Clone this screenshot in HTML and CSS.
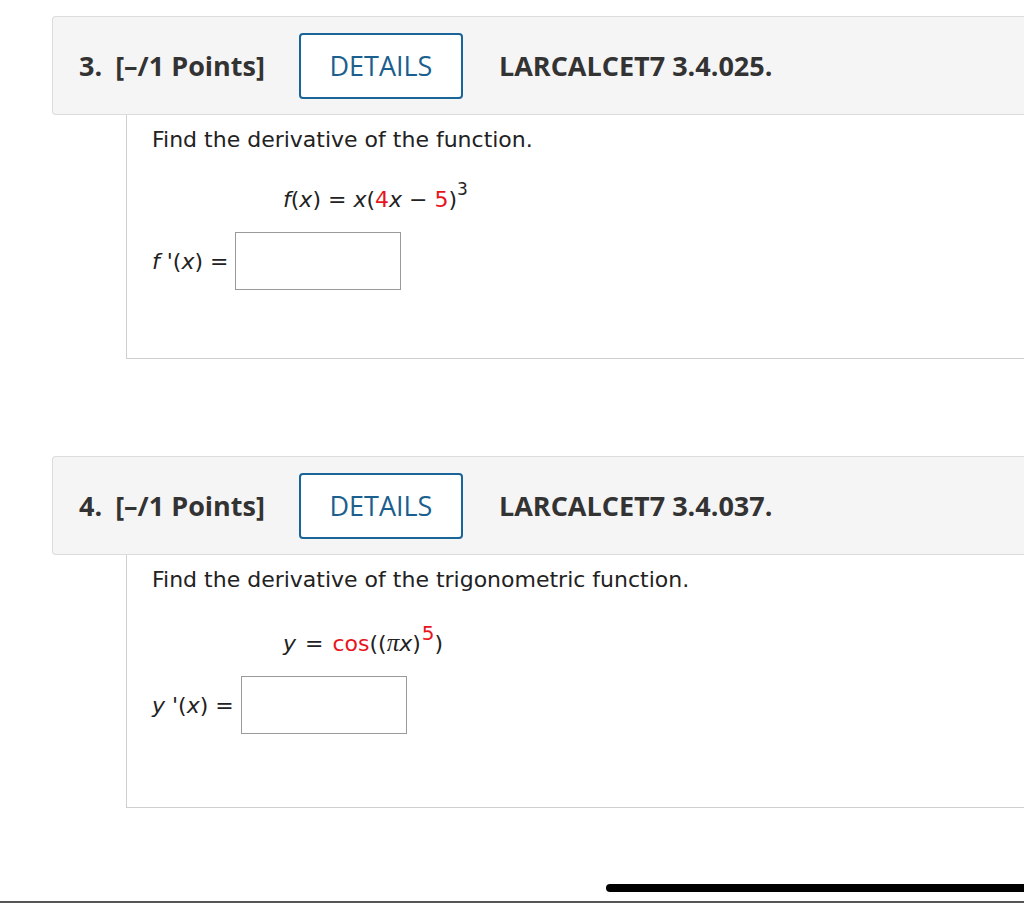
FILE: index.html
```html
<!DOCTYPE html>
<html>
<head>
<meta charset="utf-8">
<link rel="stylesheet" href="styles.css">
</head>
<body>
<div class="page">
  <section class="question">
    <div class="q-head">
      <span class="q-num">3.</span>
      <span class="q-points">[–/1 Points]</span>
      <span class="details-btn">DETAILS</span>
      <span class="q-ref">LARCALCET7 3.4.025.</span>
    </div>
    <div class="q-body">
      <p class="prompt">Find the derivative of the function.</p>
      <p class="formula"><i>f</i>(<i>x</i>) = <i>x</i>(<span class="red">4</span><i>x</i> − <span class="red">5</span>)<sup>3</sup></p>
      <div class="answer-row">
        <span class="label"><i>f</i> '(<i>x</i>) =</span>
        <span class="answer-box"></span>
      </div>
    </div>
  </section>

  <section class="question second">
    <div class="q-head">
      <span class="q-num">4.</span>
      <span class="q-points">[–/1 Points]</span>
      <span class="details-btn">DETAILS</span>
      <span class="q-ref">LARCALCET7 3.4.037.</span>
    </div>
    <div class="q-body">
      <p class="prompt">Find the derivative of the trigonometric function.</p>
      <p class="formula"><i>y</i> = <span class="red">cos</span>((<i class="pi">π</i><i>x</i>)<sup class="red big">5</sup>)</p>
      <div class="answer-row">
        <span class="label"><i>y</i> '(<i>x</i>) =</span>
        <span class="answer-box"></span>
      </div>
    </div>
  </section>
</div>
<div class="home-bar"></div>
<div class="bottom-line"></div>
</body>
</html>
```

FILE: styles.css
```css
html, body {
  margin: 0;
  padding: 0;
  background: #ffffff;
}
body {
  width: 1024px;
  height: 903px;
  overflow: hidden;
  position: relative;
}
.page {
  padding: 16px 0 0 52px;
}
.question.second {
  margin-top: 97px;
}
.q-head {
  height: 99px;
  box-sizing: border-box;
  border: 1px solid #dcdcdc;
  border-right: none;
  border-radius: 4px 0 0 4px;
  background: #f5f5f5;
  display: flex;
  align-items: center;
  padding-left: 26px;
  font-family: "Open Sans", sans-serif;
  font-weight: 700;
  font-size: 27px;
  color: #333333;
}
.q-num {
  margin-right: 13px;
}
.q-points {
  margin-right: 34px;
}
.details-btn {
  width: 164px;
  height: 66px;
  box-sizing: border-box;
  border: 2px solid #1a6598;
  border-radius: 4px;
  background: #ffffff;
  color: #1a5f8e;
  font-weight: 500;
  display: flex;
  align-items: center;
  justify-content: center;
  margin-right: 36px;
}
.q-body {
  margin-left: 74px;
  border-left: 1px solid #cfcfcf;
  border-bottom: 1px solid #cfcfcf;
  height: 244px;
  box-sizing: border-box;
  padding: 12px 0 0 25px;
  font-family: "DejaVu Sans", sans-serif;
  font-size: 22px;
  color: #222222;
}
.second .q-body {
  height: 253px;
}
.prompt {
  margin: 0;
  line-height: 26px;
}
.formula {
  margin: 34px 0 0 131px;
  line-height: 26px;
}
.second .formula {
  margin-top: 37px;
  word-spacing: 2px;
}
.formula sup {
  font-size: 17px;
  vertical-align: 12px;
  line-height: 0;
}
.formula sup.big {
  font-size: 20px;
  vertical-align: 11px;
  margin-left: 1px;
}
.pi {
  font-family: "Liberation Serif", serif;
  font-size: 25px;
}
.red {
  color: #e8141c;
}
.answer-row {
  display: flex;
  align-items: center;
  margin-top: 19px;
}
.label {
  margin-right: 7px;
}
.answer-box {
  width: 166px;
  height: 58px;
  box-sizing: border-box;
  border: 1.5px solid #9a9a9a;
  background: #ffffff;
}
.home-bar {
  position: absolute;
  left: 606px;
  right: -10px;
  top: 884px;
  height: 8px;
  border-radius: 4px;
  background: #000000;
}
.bottom-line {
  position: absolute;
  left: 0;
  right: 0;
  bottom: 0;
  height: 2px;
  background: #555555;
}
```
